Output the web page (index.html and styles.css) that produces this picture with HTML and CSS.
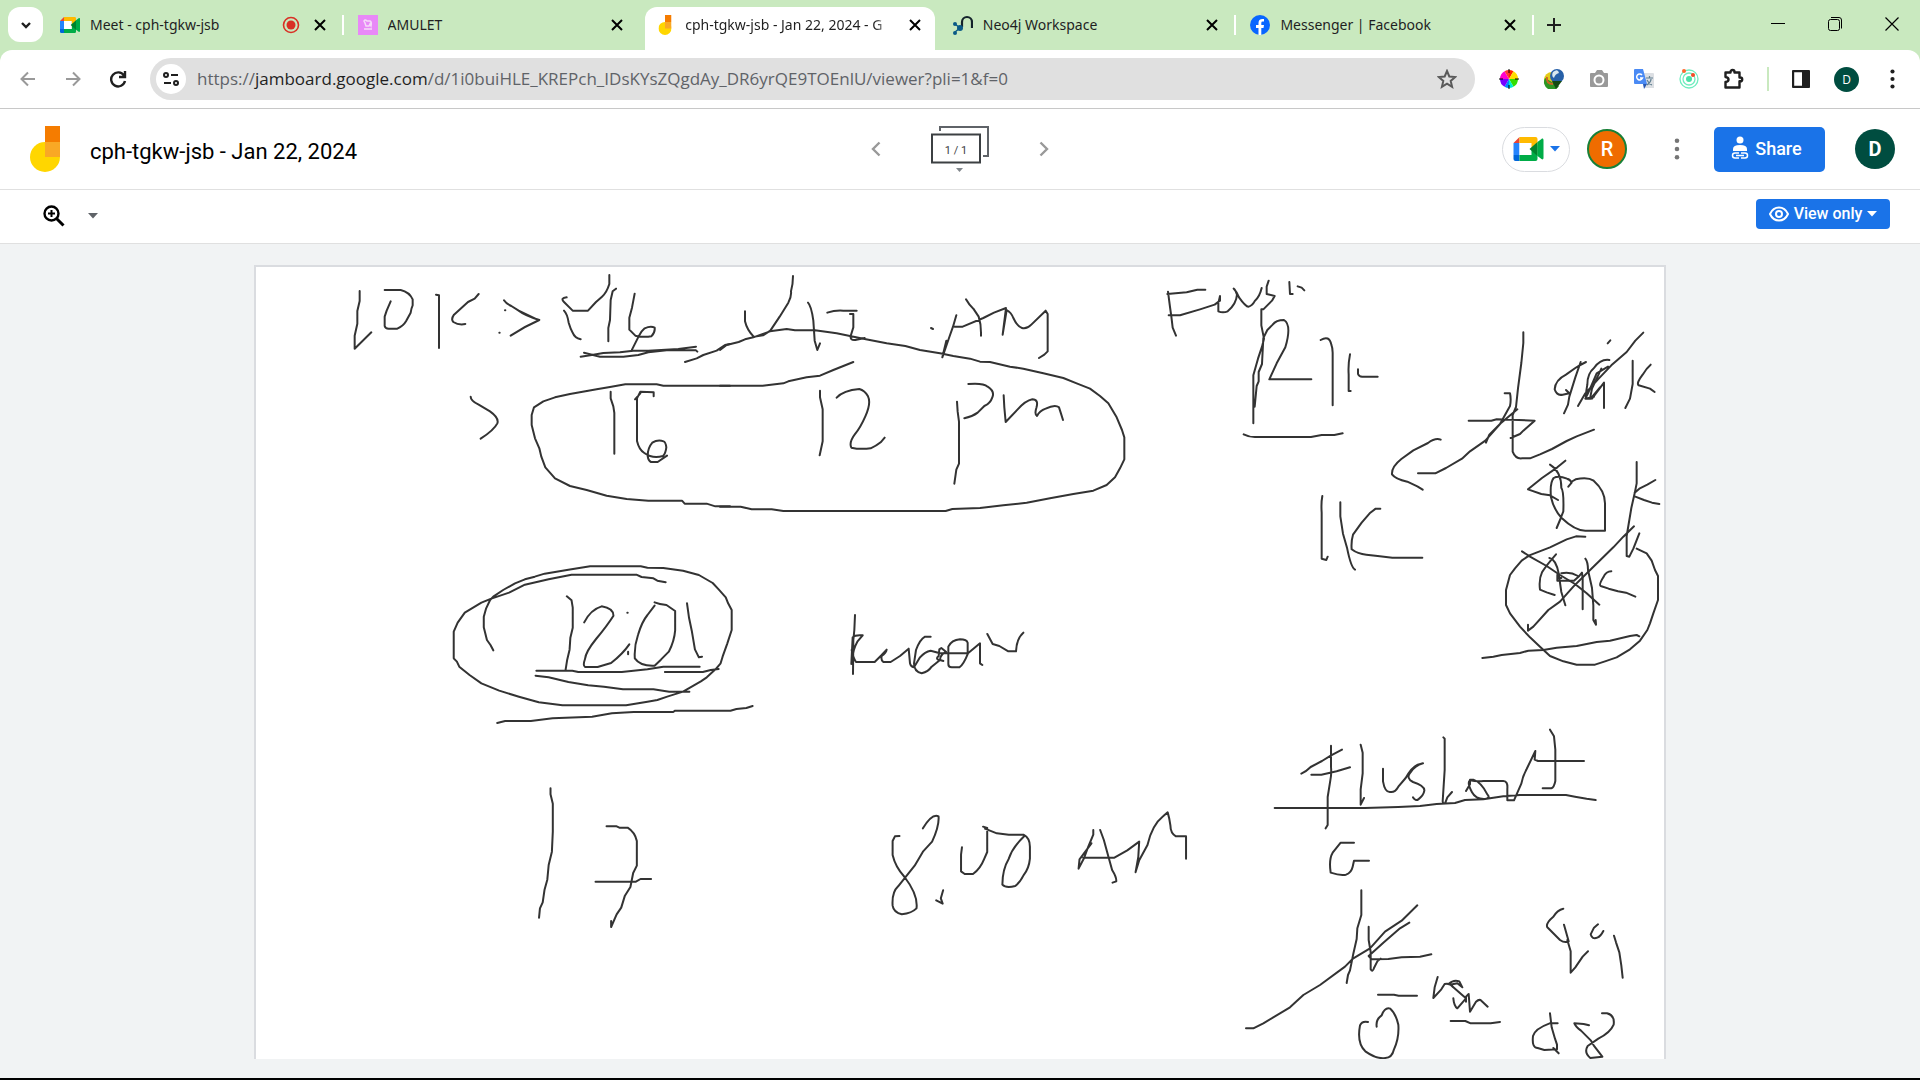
FILE: index.html
```html
<!DOCTYPE html>
<html lang="en">
<head>
<meta charset="utf-8">
<title>cph-tgkw-jsb - Jan 22, 2024 - Google Jamboard</title>
<link rel="stylesheet" href="styles.css">
</head>
<body>
<svg class="defs" aria-hidden="true">
  <symbol id="i-close" viewBox="0 0 20 20"><path d="M5 5l10 10M15 5L5 15" fill="none" stroke="currentColor" stroke-width="2"/></symbol>
  <symbol id="i-caret" viewBox="0 0 10 6"><path d="M0 0h10L5 5.500z" fill="currentColor"/></symbol>
  <symbol id="i-meet" viewBox="0 0 30 24">
    <path d="M0 6L6 0v6z" fill="#ea4335"/><path d="M0 6h6v12H0z" fill="#2684fc"/><path d="M0 18h6v6H2a2 2 0 0 1-2-2z" fill="#0066da"/>
    <path d="M6 0h16a2 2 0 0 1 2 2v6l-6 5V6H6z" fill="#ffba00"/><path d="M6 18h12v-6l6-4v14a2 2 0 0 1-2 2H6z" fill="#00ac47"/>
    <path d="M6 6h11v12H6z" fill="#fff"/><path d="M16 12l8-7v14z" fill="#00832d"/><path d="M24 5l4-3c1-1 2 0 2 1v18c0 1-1 2-2 1l-4-3z" fill="#00ac47"/>
  </symbol>
  <symbol id="i-jam" viewBox="0 0 30 46"><circle cx="15" cy="31" r="15" fill="#ffd600"/><path d="M15 16h15v15H15z" fill="#f9a825"/><path d="M15 0h15v16H15z" fill="#f57c00"/></symbol>
  <symbol id="i-dots" viewBox="0 0 6 24"><circle cx="3" cy="3" r="2.500"/><circle cx="3" cy="12" r="2.500"/><circle cx="3" cy="21" r="2.500"/></symbol>
</svg>

<header class="browser">
  <div class="tabstrip">
    <button class="tab-search" aria-label="Search tabs"><svg width="16" height="16" viewBox="0 0 16 16"><path d="M4 6l4 4 4-4" fill="none" stroke="#1f1f1f" stroke-width="2.400"/></svg></button>
    <nav class="tabs" aria-label="Open tabs">
      <div class="tab">
        <svg class="favicon" viewBox="0 0 30 24"><use href="#i-meet"/></svg>
        <a class="tab-title" href="#">Meet - cph-tgkw-jsb</a>
        <svg class="recording" width="18" height="18" viewBox="0 0 18 18"><circle cx="9" cy="9" r="7.500" fill="none" stroke="#d93025" stroke-width="1.600"/><circle cx="9" cy="9" r="4.500" fill="#d93025"/></svg>
        <button class="tab-close" aria-label="Close"><svg><use href="#i-close"/></svg></button>
      </div>
      <div class="tab">
        <svg class="favicon" viewBox="0 0 20 20"><path d="M0 0h20v20H0z" fill="#e889f7"/><path d="M6 6q1-2 3 0l3 0q2 1 1 5l-1-2-1 2H8L7 8zM6 14h8" fill="none" stroke="#f5dcf8" stroke-width="1.500"/></svg>
        <a class="tab-title" href="#">AMULET</a>
        <button class="tab-close" aria-label="Close"><svg><use href="#i-close"/></svg></button>
      </div>
      <div class="tab tab-active">
        <svg class="favicon" viewBox="0 0 30 46"><use href="#i-jam"/></svg>
        <a class="tab-title" href="#" aria-current="page">cph-tgkw-jsb - Jan 22, 2024 - G</a>
        <button class="tab-close" aria-label="Close"><svg><use href="#i-close"/></svg></button>
      </div>
      <div class="tab">
        <svg class="favicon" viewBox="0 0 20 20"><path d="M9 12V7a5 5 0 0 1 10 0v6" fill="none" stroke="#14232b" stroke-width="2.200"/><path d="M2 9l5 4-5 4" fill="none" stroke="#0a5a86" stroke-width="1.400"/><g fill="#0a5a86"><circle cx="2" cy="9" r="2"/><circle cx="7" cy="13" r="3"/><circle cx="2" cy="18" r="2"/></g></svg>
        <a class="tab-title" href="#">Neo4j Workspace</a>
        <button class="tab-close" aria-label="Close"><svg><use href="#i-close"/></svg></button>
      </div>
      <div class="tab">
        <svg class="favicon" viewBox="0 0 20 20"><circle cx="10" cy="10" r="10" fill="#0866ff"/><path d="M8.500 20v-7H6v-3h2.500V8q0-4 4-4h1.500v2.600h-1.500q-1.200 0-1.200 1.400v2H14l-.5 3h-2.200v7z" fill="#fff"/></svg>
        <a class="tab-title" href="#">Messenger | Facebook</a>
        <button class="tab-close" aria-label="Close"><svg><use href="#i-close"/></svg></button>
      </div>
    </nav>
    <button class="new-tab" aria-label="New tab"><svg width="16" height="16" viewBox="0 0 16 16"><path d="M8 1v14M1 8h14" stroke="#1f1f1f" stroke-width="2"/></svg></button>
    <div class="window-controls">
      <button aria-label="Minimize"><svg width="14" height="14" viewBox="0 0 14 14"><path d="M0 6.500h14" stroke="#000" stroke-width="1"/></svg></button>
      <button aria-label="Restore"><svg width="14" height="14" viewBox="0 0 14 14"><g fill="none" stroke="#000"><rect x="0.500" y="2.500" width="11" height="11" rx="2"/><path d="M3 .5h8q2.500 0 2.500 2.500v8.500"/></g></svg></button>
      <button aria-label="Close window"><svg width="14" height="14" viewBox="0 0 14 14"><path d="M.5.500l13 13M13.500.500l-13 13" stroke="#000" stroke-width="1.200"/></svg></button>
    </div>
  </div>

  <div class="toolbar">
    <div class="nav-buttons">
      <button aria-label="Back"><svg width="16" height="16" viewBox="0 0 16 16" fill="none" stroke="#999" stroke-width="2"><path d="M15 8H2M8 1.500L1.500 8 8 14.500"/></svg></button>
      <button aria-label="Forward"><svg width="16" height="16" viewBox="0 0 16 16" fill="none" stroke="#999" stroke-width="2"><path d="M1 8h13M8 1.500L14.500 8 8 14.500"/></svg></button>
      <button aria-label="Reload"><svg width="18" height="18" viewBox="0 0 18 18" fill="none" stroke="#1f1f1f" stroke-width="2.400"><path d="M15 5.500A7 7 0 1 0 16 11M16 1v6h-6"/></svg></button>
    </div>
    <form class="omnibox">
      <button type="button" class="site-info" aria-label="Site information"><svg width="18" height="14" viewBox="0 0 18 14" fill="none" stroke="#1f1f1f" stroke-width="2"><circle cx="4" cy="3" r="2"/><path d="M9 3h7M2 11h7"/><circle cx="14" cy="11" r="2"/></svg></button>
      <a class="url" href="#">https://<b>jamboard.google.com</b>/d/1i0buiHLE_KREPch_IDsKYsZQgdAy_DR6yrQE9TOEnlU/viewer?pli=1&amp;f=0</a>
      <button type="button" class="star" aria-label="Bookmark"><svg width="20" height="20" viewBox="0 0 20 20"><path d="M10 2l2.300 5.500 6 .5-4.600 3.900 1.400 5.900L10 14.700 4.900 17.800l1.400-5.900L1.700 8l6-.5z" fill="none" stroke="#5a5a5a" stroke-width="2"/></svg></button>
    </form>
    <div class="extensions">
      <button aria-label="Color picker"><svg width="20" height="20" viewBox="0 0 20 20"><path d="M10 10L1 10A9 9 0 0 1 5.500 2.200z" fill="#f0c"/><path d="M10 10L5.500 2.200A9 9 0 0 1 10 1z" fill="#f33"/><path d="M10 10V1a9 9 0 0 1 4.500 1.200z" fill="#f20"/><path d="M10 10l4.500-7.800A9 9 0 0 1 19 10z" fill="#fd0"/><path d="M10 10h9a9 9 0 0 1-4.500 7.800z" fill="#3d0"/><path d="M10 10l4.500 7.800A9 9 0 0 1 10 19z" fill="#0ec"/><path d="M10 10v9a9 9 0 0 1-4.500-1.200z" fill="#08f"/><path d="M10 10l-4.500 7.800A9 9 0 0 1 1 10z" fill="#70f"/><path d="M10 0v4M10 16v4M0 10h4M16 10h4" stroke="#000"/></svg></button>
      <button aria-label="Download manager"><svg width="22" height="20" viewBox="0 0 22 20"><circle cx="9" cy="11" r="8" fill="#e4cb18"/><path d="M2 9a8 8 0 0 0 14 8l-7-4z" fill="#2c9724"/><path d="M4 8q-1 7 6 7" fill="none" stroke="#c62" stroke-width="2"/><circle cx="14" cy="7" r="7" fill="#2760a8"/><path d="M10 3q5-4 6 1-4 1-5 5-3-2-1-6z" fill="#dae7ef"/><path d="M9 12h10l-6 8z" fill="#154a13"/></svg></button>
      <button aria-label="Screenshot"><svg width="20" height="18" viewBox="0 0 20 18"><path d="M1 4q0-1 1-1h4l2-3h5l2 3h3q1 0 1 1v12q0 1-1 1H2q-1 0-1-1z" fill="#999"/><circle cx="10" cy="10" r="4.500" fill="none" stroke="#fff" stroke-width="2"/></svg></button>
      <button aria-label="Translate"><svg width="22" height="20" viewBox="0 0 22 20"><path d="M9 4h11q1 0 1 1v14h-9z" fill="#dcdfe3"/><path d="M13 9h7M16.500 7v2M14 16q4-3 4-6M14 11q2 4 5 5" fill="none" stroke="#5f7f91" stroke-width="1.200"/><path d="M2 0h8l4 15H2q-1 0-1-1V1q0-1 1-1z" fill="#4a8af4"/><path d="M10 15h4l-3 5z" fill="#2857b0"/><path d="M9 6a3 3 0 1 0 .5 3H7" fill="none" stroke="#fff" stroke-width="1.500"/></svg></button>
      <button aria-label="Radar"><svg width="20" height="20" viewBox="0 0 20 20"><g fill="none" stroke="#70edbf" stroke-width="1.300"><circle cx="10" cy="10" r="9"/><circle cx="10" cy="10" r="6"/></g><circle cx="10" cy="10" r="3" fill="#4be1a6"/><circle cx="5" cy="2" r="2" fill="#ff682e"/><circle cx="14" cy="6" r="2" fill="#f44b26"/></svg></button>
      <button aria-label="Extensions"><svg width="22" height="22" viewBox="0 0 22 22"><path d="M2.500 4.500h5V4a2 2 0 0 1 4 0v.5h5v5h.8a1.800 1.800 0 0 1 0 3.800h-.8v6.200h-14v-5.500q3-.3 3-2.500t-3-2.500z" fill="none" stroke="#1f1f1f" stroke-width="2.400" stroke-linejoin="round"/></svg></button>
    </div>
    <div class="browser-end">
      <button aria-label="Side panel"><svg width="18" height="18" viewBox="0 0 18 18"><rect x="1" y="1" width="16" height="16" rx="1" fill="none" stroke="#1f1f1f" stroke-width="2.400"/><path d="M10 1h7v16h-7z" fill="#1f1f1f"/></svg></button>
      <button class="avatar avatar-small" aria-label="Profile">D</button>
      <button aria-label="Menu"><svg class="menu-dots" width="5" height="20" fill="#1f1f1f"><use href="#i-dots"/></svg></button>
    </div>
  </div>
</header>

<div class="app-header">
  <div class="document">
    <svg width="30" height="46"><use href="#i-jam"/></svg>
    <h1>cph-tgkw-jsb - Jan 22, 2024</h1>
  </div>
  <div class="pager">
    <button aria-label="Previous frame"><svg width="10" height="16" viewBox="0 0 10 16"><path d="M8.500 1.500L2 8l6.500 6.500" fill="none" stroke="#999" stroke-width="2.400"/></svg></button>
    <button class="frames" aria-label="Expand frame bar">
      <svg class="frames-art" width="58" height="46" viewBox="0 0 58 46"><path d="M9 5V1h48v29h-5" fill="none" stroke="#5f6368" stroke-width="2"/><path d="M1 8.500h48v28H1z" fill="#fff" stroke="#3c4043" stroke-width="2"/><path d="M25 42h7l-3.500 4z" fill="#80868b"/></svg>
      <span>1 / 1</span>
    </button>
    <button aria-label="Next frame"><svg width="10" height="16" viewBox="0 0 10 16"><path d="M1.500 1.500L8 8l-6.500 6.500" fill="none" stroke="#999" stroke-width="2.400"/></svg></button>
  </div>
  <div class="actions">
    <button class="meet-button" aria-label="Meet"><svg width="31" height="24"><use href="#i-meet"/></svg><svg class="blue" width="10" height="6"><use href="#i-caret"/></svg></button>
    <button class="avatar avatar-viewer">R</button>
    <button class="more" aria-label="More"><svg width="6" height="22" fill="#757575"><use href="#i-dots"/></svg></button>
    <button class="share"><svg width="18" height="24" viewBox="0 0 18 24"><circle cx="9" cy="4" r="3.500" fill="#fff"/><path d="M2 15v-2q0-4 7-4t7 4v2z" fill="#fff"/><path d="M8 17H4a2.500 2.500 0 0 0 0 5h4M10 17h4a2.500 2.500 0 0 1 0 5h-4M5 19.500h8" fill="none" stroke="#fff" stroke-width="1.500"/></svg>Share</button>
    <button class="avatar avatar-account">D</button>
  </div>
</div>

<div class="app-toolbar">
  <button class="zoom" aria-label="Zoom"><svg width="24" height="24" viewBox="0 0 24 24" fill="none" stroke="#000"><circle cx="9.500" cy="9.500" r="7" stroke-width="2.400"/><path d="M9.500 6v7M6 9.500h7" stroke-width="2"/><path d="M14.500 14.500l7 7" stroke-width="3"/></svg><svg width="10" height="6" color="#5f6368"><use href="#i-caret"/></svg></button>
  <button class="view-only"><svg width="20" height="16" viewBox="0 0 20 16"><path d="M1 8q3-6.500 9-6.500T19 8q-3 6.500-9 6.500T1 8z" fill="none" stroke="#fff" stroke-width="2"/><circle cx="10" cy="8" r="3" fill="none" stroke="#fff" stroke-width="2"/></svg>View only<svg width="10" height="6"><use href="#i-caret"/></svg></button>
</div>

<main>
  <div class="board">
    <svg class="ink" viewBox="256 267 1408 792" role="img" aria-label="Whiteboard drawing">
      <!-- dates, top left -->
      <g transform="translate(250 260) scale(.33333)">
        <path d="M329 93v30l-7 30v38l-8 36v39l50-49M422 124l-12 28-6 18v28q2 8 12 8h26q18-8 26-22l14-26q2-14 6-22v-18q-10-22-36-28h-48M558 104l9 2v158M686 102l-12 14-20 10-42 38q-10 14-2 22 16 10 36 6M762 121q6 10 22 17l22 14q18 14 62 28-46 20-86 47M806 152l50 24M950 112q-20 2-8 14l26 26h46l24-26 18-16q14-12 22-38V45M942 152q10 10 14 36 6 20 12 30 6 16 24 20M1098 86l-10 8-6 26-2 60-5 24v40M1154 101l-8 42-8 30v36l18 18q24 6 48 2 12-12 10-26-12-6-30 2-12 10-18 24l-20 40M992 290L1030 284 1060 279 1110 277 1150 272 1195 272 1285 267 1338 260M1002 278L1050 290H1120L1165 285 1195 277 1250 271H1338L1342 275M1305 306L1340 295 1360 285 1400 272 1425 255 1440 252"/>
        <path d="M662 410q0 12 24 24l34 20q28 20 22 36-10 20-50 46M1440 377H1240L1220 373H1126L1080 381 1040 388 960 402 915 412 880 424 852 442 845 465V495L855 535 868 565 874 590 886 622 915 655 960 678 1010 690 1070 707 1130 717 1195 722H1296L1304 731H1370L1396 739H1440M1082 395v20l8 24 3 20v122M1211 409v-12l-40-2-10 20v128q6 26 22 36 24 18 56 9 8-8 10-26-2-16-8-18-18-6-34 4-14 16-14 40 2 14 10 18h20L1251 587M1155 418l16-18"/>
        <path d="M765 151h1M748 218h1"/>
      </g>
      <g transform="translate(720 260) scale(.33333)">
        <path d="M0 270L20 255 56 246 75 238 100 232 150 214 200 207 225 211 285 211 350 220 430 236 500 250 556 258 600 270 660 280 700 288 750 296 780 305 810 306 870 320 910 326 970 340 1030 354 1070 370 1110 386 1140 408 1165 430 1190 472 1206 510 1213 532V598L1200 625 1185 652 1160 675 1120 692 1060 702 990 715 920 728 850 736 780 744 697 747 677 753H190L155 748H95L62 740H0M75 154v30q6 26 26 46l28-4 22-14 28-42 26-42q10-20 8-34 6-22 6-46M264 128q10 10 16 54l4 60 8 28 8-20M322 158q24-8 48-6h40M390 162h10v40l-8 26q-2 14 14 12l28-6M0 377H128L190 370 205 364 260 352 300 347 340 330 400 306M709 166l-10 34-12 34-20 58 12-50M738 118q10 18 22 28l16 24q8 24 7 57M704 200h24l62-26 32-16 36-14-10 80 12-74q14 8 20 24 12 26 26 30 14 4 28-10l43-42 6 10v112l-10 10-16 10M300 392v20l8 36v96l-9 42M350 413q20-22 68-26 16 4 26 22 10 20-8 60-14 32-30 52-20 26-12 42 26 6 58 2 18-8 30-18l12-14M745 372q44-4 58 8 22 14 14 32-6 18-24 26l-20 20q-16 12-40 17M711 425l2 30 4 30v126l-8 18-6 42M851 406l2 36 4 44 36-38q24-26 44-30 20 0 12 26-6 18 2 24 8-16 26-22 28-14 40-4 6 18 12 38"/>
        <path d="M633 204l6 3"/>
      </g>
      <!-- amounts, top right -->
      <g transform="translate(1150 260) scale(.33333)">
        <path d="M52 102l58-5 32-8h24M54 95l6 46 4 28 4 34 10 24M56 166h34l60-18 44-14 16-12v-14l-5 22v24q14 6 28 0 26-22 28-50-4-14-10-18 10 10 16 26 20 28 28 28 12-2 20-18 14-12 20-38M356 62l-6 18v22l24 6-8 14-26 26h-6v48l8 40-6 24-12 36-14 50v144M314 440l6-62 6-14v-28l10-24 4-78 12-24 16-16q10-14 34-14 24 14 4 82l-26 48-22 48h126M418 66l2 36h8M443 79l12 4 8 8M512 240q26-16 32 14 4 10 4 24v158M600 283q-6 30-4 60v50h6M624 328v14q4 10 16 8h43M281 523q20 10 40 8h162l32-6h38l25-5"/>
        <path d="M1120 217v32l-6 60-10 76-6 56-10 24v110q8 22 28 20h24l30-12 36-16 44-24 30-14 52-20M1064 400h16q4 18 0 38l-30 54-32 32-10 24M1102 448l-48 40-48 54-46 32-24 22-48 28-32 16h-52M956 482h68l16-4 114 4-34 30-10 10-28 12M872 539q-16-6-38 10l-44 22-36 26q-30 24-28 46 10 14 46 22l30 14 16 10M517 708q-4 20-2 50v138l14 4 4-10M571 727v42l8 52 12 42q12 60 24 66M691 746h-14l-18 14-24 28-26 36q-6 20-4 44 18 14 44 16l34 4 44 5h90"/>
        <path d="M1308 306q-20 10-32 18l-28 20q-32 16-34 44 6 20 24 16l20-4-10-10M1292 306l-16 46-18 58-4 24-12 26M1480 218l-24 24-26 34-46 40-38 40-40 44-22 38M1378 300q-26-4-46 24-20 16-20 50-6 34-4 42h12l6-30 28-60M1374 320l-34 20-26 60-8 16 26-6M1350 382l-28 34M1326 416l36-48v76M1448 302v70l-8 44-14 28M1502 314q-12 10-24 30-20 26-12 32l34 10 14 10M1373 250l8-9"/>
      </g>
      <!-- crossed-out amount and circled total -->
      <g transform="translate(1450 440) scale(.33333)">
        <path d="M346 62l-24 20-46 32-42 34 40 14 26 4 24 14M300 74q34 20 34 70 8 10 6 70l-10 26-10 24M355 140l10-12q-4-10-14-12-26-10-40-2-12 14-8 58 8 36 32 62 42 40 74 38h56V190q0-38-34-68-18-12-54-4l-14 8M560 66v64l-6 30-10 44-8 48-6 36v60l8 2 12-24 18-46M554 158l14-12 24-12 24-14M556 170l26 10 24 8 22 4M216 334L240 350 290 378 330 405 375 432 410 460 448 494M552 259L520 290 490 322 415 395 370 440 330 485 295 510 250 560 234 572V554M406 290L378 289 350 298 300 322 238 346 215 362 195 385 180 405 168 450V495L180 520 210 560 240 592 270 620 300 648 340 664 380 674H435L465 664 500 652 540 628 570 602 592 570 600 550 610 520 624 480V408L615 390 605 362 590 340 560 326"/>
        <path d="M318 343q-30 34-42 54-10 20-6 52l20 8 24 8M298 354q20 4 28 46l8 56 12 40M334 400q26-6 50 8M322 404v18h50l16-14 8-10 2 18v92M322 414h12M406 356q8 10 8 34l12 54 4 52v44l8 14-1-14M484 394q-16 0-24 18-14 22-8 26l24 8 28 8 24 4 28 12M97 654L130 650 155 645 210 639 235 632 280 630 320 623 380 618 440 606 480 602 540 588 560 585 568 589"/>
      </g>
      <!-- circled time -->
      <g transform="translate(430 540) scale(.3954 .33333)">
        <path d="M160 331L153 315 144 300 136 262V230L142 205 152 180 160 170 185 150 215 130 240 118 265 110 290 101 350 89 405 79H533L550 83 590 84 640 92 680 105 715 129 730 148 748 172 754 190 763 210V270L752 310 740 350 735 370 722 388 700 412 685 424 640 455 600 470 575 480 550 485 496 496H335L275 487 225 470 175 452 130 430 100 405 74 380 68 365 60 355V275L70 248 88 218 130 188 155 176 200 158 240 134 300 118 358 104H522L535 111 565 115 575 122 596 127M346 169l12 12 3 22v60l-6 30-2 36-6 30-4 30M390 247q16-38 44-48 30 6 30 28-16 30-44 70-26 38-28 60-6 20 0 24h32l34-12q30-28 46-56M568 187q12 6 30 8l22 18v58q-2 32-16 64l-20 24-16 18q-36 2-50-22-2-36 8-70 10-40 24-60l18-28M650 190q4 44 12 82l8 56 10 24 8-2M269 392H360L375 396H485L550 388 590 380H682M730 387L710 390 690 396H594M267 407L300 412 350 426 400 436 440 440 488 448H565L605 455H656M170 549L190 543H255L310 535 410 530 460 520 515 516H615L620 512H760L775 507 800 504 816 498"/>
        <path d="M499 218h1M501 335v8"/>
      </g>
      <!-- note beside the time -->
      <g transform="translate(840 600) scale(.33333)">
        <path d="M45 45L43 90 40 120 39 222M68 106Q45 104 38 112L34 192 38 175Q38 150 52 125L68 106M35 150Q40 175 48 186H104L125 165 140 149Q138 160 125 168 122 180 130 186H152L180 168 206 146 210 190Q212 200 222 202L240 172Q255 155 272 152L300 160H383V128Q380 118 360 118 335 120 325 140V192Q325 202 335 202H358Q370 195 384 160L420 130V190L427 195M272 110H255Q240 118 228 150L222 190Q222 215 245 220 265 215 275 200L300 180 310 183M296 180Q286 176 296 168L298 148 304 144 318 155Q300 165 300 180M442 102L458 132 478 138 505 154H528Q530 115 550 98"/>
      </g>
      <!-- seventeenth, 8 am -->
      <g transform="translate(500 750) scale(.4592 .33333)">
        <path d="M110 115v18l5 28v84l-2 60-7 40-3 44-6 30-4 38-6 18-2 28M232 229h22l6 4h18q16 14 20 40v74l-8 22-6 42-12 26-8 36-10 20-12 38v-18M208 395h88l10-8h23M870 258l-10 1-5 14v42q6 36 26 66 30 54 26 94-10 14-32 18-18-6-20-26-2-40 12-58l36-62 18-42 20-30q16-48 14-76-14-10-34 36M1006 292l-2 22v50l8 8h18q16-16 24-44l7-22v-72l-9-4M1056 236l26 14 26 4h32q14 10 14 36v36q-2 30-14 50-8 22-18 32-20 8-28-4 0-46 14-78 8-34 34-68M965 421l-5 24 4 16-14-10M1292 240v14l-12 40-8 30-12 32 2-28 26-48M1307 240l8 30 10 50 8 40q10 22 9 34l-8 4M1270 323h68l28-22 26-26-2 46-6 46 8-36 18-46q10-60 34-86l10-12q4 18 6 40 0 22 12 32h22v67"/>
      </g>
      <!-- note and workings, bottom right -->
      <g transform="translate(1220 700) scale(.33333)">
        <path d="M333 137v64q2 20-2 40l-8 50v84l-6 10M244 221q14-6 28-20l34-18 26-16 34-18M274 224h30l46-10 40-12M422 134l6 24v62l-6 48v46l10-20M489 206v38q6 34 22 32 14 2 24-16l22-26q18-32 36-40l16-4q-24 6-38 28-14 16 8 28 36 12 34 26-2 14-18 26-8 6-16-6M670 112l4 4v94l-6 94q2 10 8 4l6-16 14-16M738 273l12-20v-14h10q24 8 42 44 10 10-6 14-28 2-40-20-16-30-6-36 20 4 40 2h60q14 0 12 24v34h20l22-50q4-22 16-44l26-54-2 26 10 4h138M990 89l12 20 4 40v94q-4 20-12 22h-26M164 324H434L535 321 600 318 650 312 705 309 735 300 790 298 850 289 900 285H1038L1065 290 1100 296 1127 300M402 428h-40l-24 30q-12 20-6 60 30 10 46 6 16-6 20-24l4-18h45"/>
        <path d="M424 571v74l-12 40-2 32-10 44-10 50-6 14-4 24M592 616L545 662 495 695 450 745 400 775 375 800 300 855 250 885 210 922 130 970 100 985H78M446 680v40l6 36v52q6 10 10-4l10-20 10-8M568 668L540 685 490 728 446 768 455 778 505 777 545 772 600 770 634 763M474 884h48l14 3h55M653 831L644 862 640 894 664 868 674 852Q690 848 700 862L730 888 738 895 712 925Q702 918 700 895M686 852Q700 838 718 844L727 862 712 850 690 854M738 905V890L746 882 750 935 768 905Q778 896 784 902L803 920M692 963h44l16 7h60l28-4M444 966q-18-4-24 10-10 54 16 78 34 24 60 20 20 0 26-26 16-34 13-74-8-34-24-48-16-6-26 20-18 12-15 34"/>
        <path d="M1030 626q-18 4-30 24-24 20-18 32l38 38q14 10 26 4l-14-50M1042 720l10 34v64l14-16 22-32 16-16M1134 673l-12 10-10 20q4 16 20 10 10-4 18-20M1182 707l6 20 10 30 6 40 4 36M1013 970h-24q-44 16-50 38-4 36 14 36l20 6 38-2v-14l-6-18-10-34-5-42M1000 1044l16 16M1107 976l-16-4-28-2q4 10 20 22l30 30 8 14 26 34-36 4q-20-16-8-36l32-22q36-18 46-42 4-28-20-34h-15"/>
      </g>
    </svg>
  </div>
</main>
</body>
</html>
```
FILE: styles.css
```css
* { box-sizing: border-box; }
body {
  display: flex;
  flex-direction: column;
  min-height: 100vh;
  margin: 0;
  border-bottom: 2px solid #000;
  background: #f1f3f4;
  font-family: Roboto, "Noto Sans", sans-serif;
  color: #000;
}
.defs { position: absolute; width: 0; height: 0; }
button {
  display: inline-flex;
  align-items: center;
  justify-content: center;
  padding: 0;
  border: 0;
  background: none;
  color: inherit;
  font: inherit;
}
a { color: inherit; text-decoration: none; }
svg { flex: none; }

/* Browser chrome */
.browser { background: #c9e9bf; font-family: "Open Sans", "Noto Sans", sans-serif; }
.tabstrip { display: flex; height: 50px; }
.tab-search { width: 35px; height: 35px; margin: 7px 3px 0 8px; border-radius: 12px; background: #fff; }
.tabs { display: flex; flex: 0 1 1488px; min-width: 0; }
.tab {
  position: relative;
  display: flex;
  flex: 1 1 0;
  align-items: center;
  min-width: 0;
  padding: 0 14px;
  gap: 10px;
}
.tab:not(.tab-active)::after {
  content: "";
  position: absolute;
  top: 15px;
  right: 0;
  width: 2px;
  height: 20px;
  background: #fff;
}
.tab:nth-child(2)::after { display: none; }
.favicon { width: 20px; height: 20px; }
.tab-title {
  flex: 1;
  overflow: hidden;
  font-family: "Noto Sans", sans-serif;
  font-size: 14px;
  line-height: 20px;
  white-space: nowrap;
  color: #1f1f1f;
}
.tab-close svg { width: 20px; height: 20px; }
.tab-active::before {
  content: "";
  position: absolute;
  inset: 7px 4px 0;
  border-radius: 12px 12px 0 0;
  background: #fff;
}
.tab-active > * { position: relative; }
.tab-active .tab-title { mask-image: linear-gradient(90deg, #000 90%, transparent); }
.new-tab { width: 40px; }
.window-controls { display: flex; margin-left: auto; }
.window-controls button { width: 57px; height: 48px; }

.toolbar {
  display: flex;
  align-items: center;
  height: 59px;
  padding: 0 10px;
  border-bottom: 1px solid #c8c8c8;
  border-radius: 12px 12px 0 0;
  background: #fff;
}
.nav-buttons { display: flex; gap: 9px; }
.nav-buttons button { width: 36px; height: 36px; }
.omnibox {
  display: flex;
  flex: 1;
  align-items: center;
  height: 42px;
  min-width: 0;
  margin-left: 14px;
  padding: 0 18px 0 6px;
  border-radius: 21px;
  background: #e0e0e0;
}
.site-info { width: 30px; height: 30px; border-radius: 50%; background: #fff; }
.url { flex: 1; overflow: hidden; margin-left: 11px; font-size: 17px; line-height: 24px; white-space: nowrap; color: #5f6368; }
.url b { font-weight: 400; color: #1f1f1f; }
.extensions { display: flex; gap: 9px; margin-left: 16px; padding-right: 15px; border-right: 2px solid #c9e9bf; }
.extensions button { width: 36px; height: 24px; }
.browser-end { display: flex; align-items: center; gap: 9px; margin-left: 14px; }
.browser-end button { width: 36px; }
.browser-end .avatar-small { width: 25px; height: 25px; margin: 0 6px; font-size: 12px; }

.avatar { border-radius: 50%; background: #004d40; color: #fff; }

/* Document header */
.app-header {
  display: grid;
  grid-template-columns: 1fr auto 1fr;
  align-items: center;
  height: 81px;
  padding: 0 25px;
  border-bottom: 1px solid #e0e0e0;
  background: #fff;
}
.document { display: flex; align-items: center; gap: 30px; padding-left: 5px; }
h1 { margin: 6px 0 0; font-size: 22px; font-weight: 400; line-height: 32px; white-space: nowrap; }
.pager { display: flex; align-items: center; gap: 39px; }
.pager > button { width: 32px; }
.pager > .frames { display: grid; width: 58px; }
.frames > * { grid-area: 1 / 1; }
.frames span { padding: 4px 8px 0 0; font-size: 11px; line-height: 14px; color: #3c4043; }
.actions { display: flex; align-items: center; justify-content: flex-end; }
.meet-button { gap: 6px; width: 68px; height: 45px; border: 1px solid #dadce0; border-radius: 23px; }
.blue { color: #1a73e8; }
.avatar-viewer { width: 40px; height: 40px; margin-left: 17px; border: 2px solid #188038; background: #ef6c00; font-size: 20px; font-weight: 500; }
.more { width: 40px; height: 40px; margin: 0 17px 0 30px; }
.share { gap: 6px; width: 111px; height: 45px; padding: 0 6px 2px 0; border-radius: 5px; background: #1a73e8; color: #fff; font-size: 18px; font-weight: 500; }
.avatar-account { width: 40px; height: 40px; margin-left: 30px; font-size: 20px; font-weight: 700; }

.app-toolbar {
  display: flex;
  align-items: center;
  justify-content: space-between;
  height: 54px;
  padding: 0 30px 2px 42px;
  border-bottom: 1px solid #e0e0e0;
  background: #fff;
}
.zoom { gap: 22px; }
.view-only { gap: 5px; width: 134px; height: 30px; margin-bottom: 4px; border-radius: 4px; background: #1a73e8; color: #fff; font-size: 16px; font-weight: 500; }

/* Whiteboard */
main { flex: 1; padding: 21px 254px 19px; }
.board { border: 2px solid #dadce0; border-bottom: 0; background: #fff; }
.ink { display: block; width: 100%; height: auto; }
.ink path {
  fill: none;
  stroke: #333;
  stroke-width: 2;
  stroke-linecap: round;
  stroke-linejoin: round;
  vector-effect: non-scaling-stroke;
}
```
